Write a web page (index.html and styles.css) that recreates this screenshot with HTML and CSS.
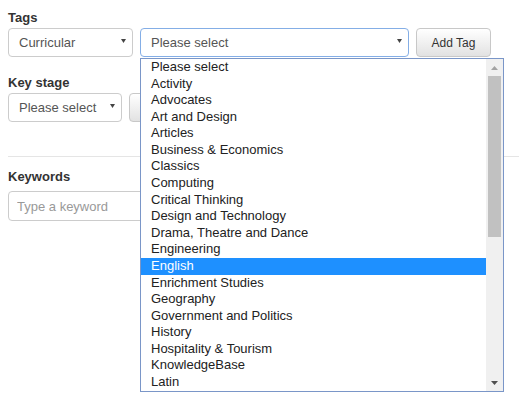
FILE: index.html
```html
<!DOCTYPE html>
<html>
<head>
<meta charset="utf-8">
<link rel="stylesheet" href="styles.css">
</head>
<body>
<div class="page">
  <div class="field">
    <label class="label">Tags</label>
    <div class="row">
      <div class="select sel-type"><span class="sel-text">Curricular</span><svg class="caret" width="5" height="4" viewBox="0 0 10 8"><polygon points="0,0 10,0 5,8"/></svg></div>
      <div class="select sel-tag is-focused"><span class="sel-text">Please select</span><svg class="caret" width="5" height="4" viewBox="0 0 10 8"><polygon points="0,0 10,0 5,8"/></svg></div>
      <button class="btn btn-tag">Add Tag</button>
    </div>
  </div>
  <div class="field field-ks">
    <label class="label">Key stage</label>
    <div class="row">
      <div class="select sel-ks"><span class="sel-text">Please select</span><svg class="caret" width="5" height="4" viewBox="0 0 10 8"><polygon points="0,0 10,0 5,8"/></svg></div>
      <button class="btn btn-ks" aria-label="Add Key stage"></button>
    </div>
  </div>
  <div class="divider"></div>
  <div class="field field-kw">
    <label class="label label-kw">Keywords</label>
    <input class="input" type="text" placeholder="Type a keyword">
  </div>

  <div class="dropdown">
    <ul class="options">
      <li class="option">Please select</li>
      <li class="option">Activity</li>
      <li class="option">Advocates</li>
      <li class="option">Art and Design</li>
      <li class="option">Articles</li>
      <li class="option">Business &amp; Economics</li>
      <li class="option">Classics</li>
      <li class="option">Computing</li>
      <li class="option">Critical Thinking</li>
      <li class="option">Design and Technology</li>
      <li class="option">Drama, Theatre and Dance</li>
      <li class="option">Engineering</li>
      <li class="option is-active">English</li>
      <li class="option">Enrichment Studies</li>
      <li class="option">Geography</li>
      <li class="option">Government and Politics</li>
      <li class="option">History</li>
      <li class="option">Hospitality &amp; Tourism</li>
      <li class="option">KnowledgeBase</li>
      <li class="option">Latin</li>
    </ul>
    <div class="scrollbar">
      <div class="sb-btn"><svg width="7" height="4" viewBox="0 0 7 4"><polygon class="sb-up" points="0,4 7,4 3.5,0"/></svg></div>
      <div class="sb-track"><div class="sb-thumb"></div></div>
      <div class="sb-btn"><svg width="7" height="4" viewBox="0 0 7 4"><polygon class="sb-down" points="0,0 7,0 3.5,4"/></svg></div>
    </div>
  </div>
</div>
</body>
</html>
```
FILE: styles.css
```css
html, body {
  margin: 0;
  padding: 0;
  background: #fff;
}
body {
  font-family: "Liberation Sans", Arial, sans-serif;
  font-size: 13px;
  color: #333;
  overflow: hidden;
}
.page {
  position: relative;
  padding: 9px 8px 0 8px;
  width: 519px;
  height: 405px;
  box-sizing: border-box;
}
.label {
  display: block;
  font-weight: bold;
  font-size: 13px;
  line-height: 18px;
  margin-bottom: 1px;
  color: #333;
}
.row {
  display: flex;
  gap: 7px;
}
.select {
  box-sizing: border-box;
  height: 29px;
  border: 1px solid #ccc;
  border-radius: 4px;
  background: #fff;
  display: flex;
  align-items: center;
  padding: 0 6px 0 10px;
  color: #555;
}
.sel-text {
  flex: 1;
  line-height: 27px;
  white-space: nowrap;
}
.caret {
  fill: #444;
  margin-top: -3px;
  display: block;
}
.sel-type { width: 125px; }
.sel-tag { width: 269px; }
.sel-ks { width: 114px; }
.is-focused {
  border-color: #84aee6;
}
.btn {
  box-sizing: border-box;
  height: 29px;
  border: 1px solid #c8c8c8;
  border-radius: 4px;
  background: linear-gradient(#ffffff, #e2e2e2);
  font-family: "Liberation Sans", Arial, sans-serif;
  font-size: 12px;
  color: #333;
  padding: 0;
}
.btn-tag { width: 75px; }
.btn-ks { width: 110px; }
.field-ks { margin-top: 17px; }
.divider {
  margin-top: 34px;
  margin-right: -8px;
  height: 1px;
  background: #e5e5e5;
}
.field-kw { margin-top: 11px; }
.label-kw { margin-bottom: 5px; }
.input {
  display: block;
  box-sizing: border-box;
  width: 230px;
  height: 30px;
  border: 1px solid #ccc;
  border-radius: 4px;
  padding: 0 8px;
  font-family: "Liberation Sans", Arial, sans-serif;
  font-size: 13px;
  color: #555;
  outline: none;
}
.input::placeholder { color: #999; }

.dropdown {
  position: absolute;
  left: 140px;
  top: 58px;
  width: 364px;
  height: 334px;
  box-sizing: border-box;
  border: 1px solid #7a96c8;
  background: #fff;
  display: flex;
}
.options {
  list-style: none;
  margin: 0;
  padding: 0;
  flex: 1;
  overflow: hidden;
}
.option {
  height: 16.58px;
  line-height: 15.6px;
  padding-left: 10px;
  color: #222;
  white-space: nowrap;
}
.option.is-active {
  background: #1e90ff;
  color: #fff;
}
.scrollbar {
  width: 17px;
  background: #f0f0f0;
  display: flex;
  flex-direction: column;
}
.sb-btn {
  height: 17px;
  display: flex;
  align-items: center;
  justify-content: center;
}
.sb-btn svg { display: block; }
.sb-up { fill: #a3a3a3; }
.sb-down { fill: #505050; }
.sb-track {
  flex: 1;
}
.sb-thumb {
  margin: 0 2px;
  height: 161px;
  background: #c1c1c1;
}
```
